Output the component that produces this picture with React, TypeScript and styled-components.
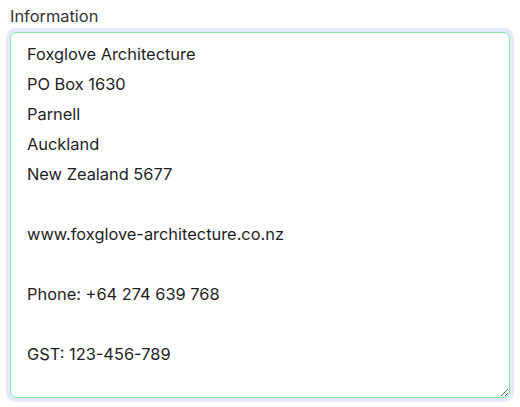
import React from 'react';
import styled, { createGlobalStyle } from 'styled-components';

const GlobalStyle = createGlobalStyle`
  body {
    margin: 0;
    background: #ffffff;
    font-family: "Inter", "Liberation Sans", sans-serif;
  }
`;

const info = `Foxglove Architecture
PO Box 1630
Parnell
Auckland
New Zealand 5677

www.foxglove-architecture.co.nz

Phone: +64 274 639 768

GST: 123-456-789`;

export default function App() {
  return (
    <>
      <GlobalStyle />
      <Field>
        <Label htmlFor="information">Information</Label>
        <InfoArea id="information" defaultValue={info} />
      </Field>
    </>
  );
}

const Field = styled.div`
  display: flex;
  flex-direction: column;
  padding: 5px 10px;
`;

const Label = styled.label`
  font-size: 16.4px;
  color: #333333;
  line-height: 22px;
  margin-bottom: 5px;
`;

const InfoArea = styled.textarea`
  box-sizing: border-box;
  width: 500px;
  height: 366px;
  padding: 6px 16px;
  font-family: "Inter", "Liberation Sans", sans-serif;
  font-size: 16.4px;
  line-height: 30px;
  color: #1e1e24;
  border: 1px solid #7fe9a8;
  border-radius: 6px;
  box-shadow: 0 0 0 4px #e6e8fb;
  outline: none;
  resize: both;
`;
